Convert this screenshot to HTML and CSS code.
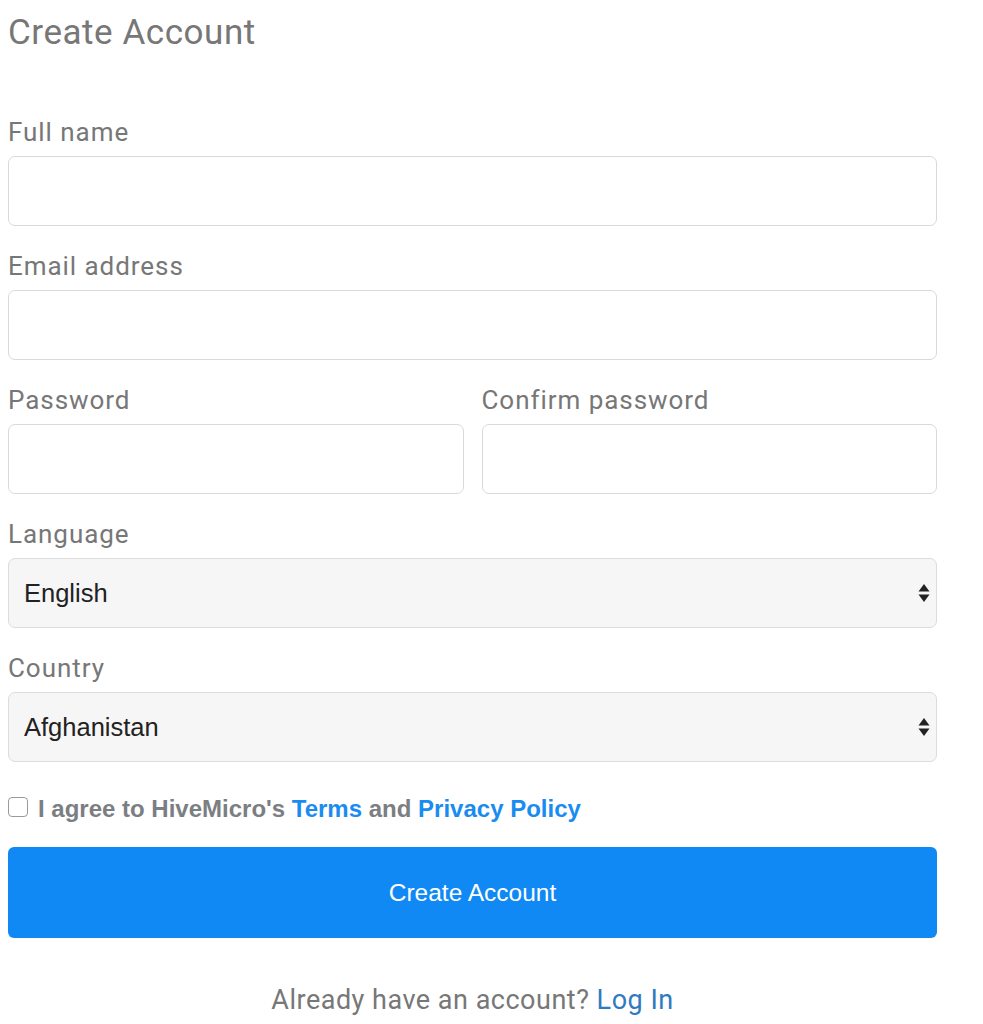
FILE: index.html
```html
<!DOCTYPE html>
<html lang="en">
<head>
<meta charset="utf-8">
<title>Create Account</title>
<link rel="stylesheet" href="styles.css">
</head>
<body>
<div class="page">
  <h1 class="title">Create Account</h1>
  <form class="form">
    <div class="field">
      <label class="label">Full name</label>
      <input class="input" type="text">
    </div>
    <div class="field">
      <label class="label">Email address</label>
      <input class="input" type="email">
    </div>
    <div class="row">
      <div class="field">
        <label class="label">Password</label>
        <input class="input" type="password">
      </div>
      <div class="field">
        <label class="label">Confirm password</label>
        <input class="input" type="password">
      </div>
    </div>
    <div class="field">
      <label class="label">Language</label>
      <div class="select-wrap">
        <select class="select"><option>English</option></select>
        <svg class="arrows" width="12" height="20" viewBox="0 0 12 20"><path d="M6 1 L11.5 8.5 L0.5 8.5 Z M0.5 11.5 L11.5 11.5 L6 19 Z" fill="#222"/></svg>
      </div>
    </div>
    <div class="field">
      <label class="label">Country</label>
      <div class="select-wrap">
        <select class="select"><option>Afghanistan</option></select>
        <svg class="arrows" width="12" height="20" viewBox="0 0 12 20"><path d="M6 1 L11.5 8.5 L0.5 8.5 Z M0.5 11.5 L11.5 11.5 L6 19 Z" fill="#222"/></svg>
      </div>
    </div>
    <label class="agree">
      <input class="check" type="checkbox">
      <span>I agree to HiveMicro's <a class="link" href="#">Terms</a> and <a class="link" href="#">Privacy Policy</a></span>
    </label>
    <button class="btn" type="button">Create Account</button>
  </form>
  <p class="footer">Already have an account? <a class="login" href="#">Log In</a></p>
</div>
</body>
</html>
```

FILE: styles.css
```css
html, body {
  margin: 0;
  padding: 0;
  background: #fff;
}
.page {
  width: 929px;
  padding: 14px 0 0 8px;
  font-family: Roboto, "Liberation Sans", sans-serif;
}
.title {
  margin: 0;
  font-size: 35px;
  line-height: 38px;
  letter-spacing: 0.55px;
  font-weight: 400;
  color: #777;
}
.form {
  margin-top: 66px;
  display: flex;
  flex-direction: column;
  gap: 26px;
}
.field {
  display: flex;
  flex-direction: column;
  flex: 1;
  min-width: 0;
}
.row {
  display: flex;
  gap: 18px;
}
.label {
  font-size: 26px;
  line-height: 29px;
  letter-spacing: 0.95px;
  color: #777;
  margin-bottom: 9px;
}
.input {
  box-sizing: border-box;
  height: 70px;
  width: 100%;
  border: 1.5px solid #d9d9d9;
  border-radius: 7px;
  background: #fff;
  margin: 0;
}
.select-wrap {
  position: relative;
}
.select {
  appearance: none;
  -webkit-appearance: none;
  box-sizing: border-box;
  width: 100%;
  height: 70px;
  margin: 0;
  padding: 0 0 0 15px;
  border: 1.5px solid #dcdcdc;
  border-radius: 7px;
  background: #f6f6f6;
  font-family: "Liberation Sans", Arial, sans-serif;
  font-size: 25.5px;
  color: #222;
}
.arrows {
  position: absolute;
  right: 7px;
  top: 25px;
}
.agree {
  display: flex;
  align-items: center;
  gap: 10px;
  margin-top: 8px;
  font-family: "Liberation Sans", Arial, sans-serif;
  font-weight: 700;
  font-size: 24px;
  line-height: 26px;
  color: #7b7e82;
}
.check {
  appearance: none;
  -webkit-appearance: none;
  margin: 0;
  width: 20px;
  height: 20px;
  box-sizing: border-box;
  border: 1.5px solid #9a9a9a;
  border-radius: 4px;
  background: #fff;
  position: relative;
  top: -2px;
}
.link {
  color: #1a8cf0;
  text-decoration: none;
}
.btn {
  margin-top: -1px;
  height: 91px;
  border: none;
  border-radius: 6px;
  background: #1089f4;
  color: #fff;
  font-family: "Liberation Sans", Arial, sans-serif;
  font-size: 24.5px;
}
.footer {
  margin: 48px 0 0;
  text-align: center;
  font-size: 27px;
  line-height: 29px;
  letter-spacing: 0.5px;
  color: #777;
}
.login {
  color: #2f7bbf;
  text-decoration: none;
}
```
